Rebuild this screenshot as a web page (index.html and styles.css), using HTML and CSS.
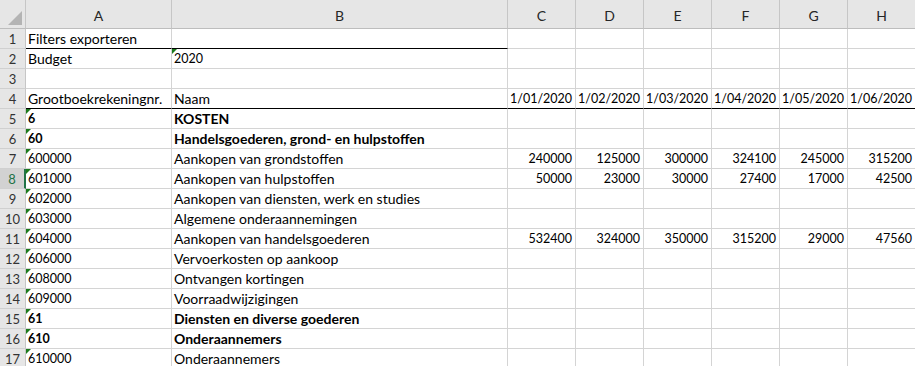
FILE: index.html
```html
<!DOCTYPE html>
<html lang="nl">
<head>
  <meta charset="UTF-8" />
  <title>Filters exporteren</title>
  <link rel="stylesheet" href="styles.css">
</head>
<body>
  <div class="sheet">
    <div class="row head">
      <div class="corner"><svg width="14" height="14" viewBox="0 0 14 14"><polygon points="14,0 14,14 0,14" fill="#b4b4b4"/></svg></div>
      <div class="col">A</div><div class="col">B</div><div class="col">C</div><div class="col">D</div>
      <div class="col">E</div><div class="col">F</div><div class="col">G</div><div class="col">H</div>
    </div>

    <div class="row">
      <div class="num">1</div>
      <div class="cell line">Filters exporteren</div><div class="cell line"></div>
      <div class="cell"></div><div class="cell"></div><div class="cell"></div><div class="cell"></div><div class="cell"></div><div class="cell"></div>
    </div>
    <div class="row">
      <div class="num">2</div>
      <div class="cell">Budget</div><div class="cell n flag">2020</div>
      <div class="cell"></div><div class="cell"></div><div class="cell"></div><div class="cell"></div><div class="cell"></div><div class="cell"></div>
    </div>
    <div class="row">
      <div class="num">3</div>
      <div class="cell"></div><div class="cell"></div>
      <div class="cell"></div><div class="cell"></div><div class="cell"></div><div class="cell"></div><div class="cell"></div><div class="cell"></div>
    </div>
    <div class="row">
      <div class="num">4</div>
      <div class="cell line">Grootboekrekeningnr.</div><div class="cell line">Naam</div>
      <div class="cell line n r">1/01/2020</div><div class="cell line n r">1/02/2020</div><div class="cell line n r">1/03/2020</div>
      <div class="cell line n r">1/04/2020</div><div class="cell line n r">1/05/2020</div><div class="cell line n r">1/06/2020</div>
    </div>
    <div class="row bold">
      <div class="num">5</div>
      <div class="cell n flag">6</div><div class="cell">KOSTEN</div>
      <div class="cell"></div><div class="cell"></div><div class="cell"></div><div class="cell"></div><div class="cell"></div><div class="cell"></div>
    </div>
    <div class="row bold">
      <div class="num">6</div>
      <div class="cell n flag">60</div><div class="cell">Handelsgoederen, grond- en hulpstoffen</div>
      <div class="cell"></div><div class="cell"></div><div class="cell"></div><div class="cell"></div><div class="cell"></div><div class="cell"></div>
    </div>
    <div class="row">
      <div class="num">7</div>
      <div class="cell n flag">600000</div><div class="cell">Aankopen van grondstoffen</div>
      <div class="cell n r">240000</div><div class="cell n r">125000</div><div class="cell n r">300000</div>
      <div class="cell n r">324100</div><div class="cell n r">245000</div><div class="cell n r">315200</div>
    </div>
    <div class="row">
      <div class="num sel">8</div>
      <div class="cell n flag">601000</div><div class="cell">Aankopen van hulpstoffen</div>
      <div class="cell n r">50000</div><div class="cell n r">23000</div><div class="cell n r">30000</div>
      <div class="cell n r">27400</div><div class="cell n r">17000</div><div class="cell n r">42500</div>
    </div>
    <div class="row">
      <div class="num">9</div>
      <div class="cell n flag">602000</div><div class="cell">Aankopen van diensten, werk en studies</div>
      <div class="cell"></div><div class="cell"></div><div class="cell"></div><div class="cell"></div><div class="cell"></div><div class="cell"></div>
    </div>
    <div class="row">
      <div class="num">10</div>
      <div class="cell n flag">603000</div><div class="cell">Algemene onderaannemingen</div>
      <div class="cell"></div><div class="cell"></div><div class="cell"></div><div class="cell"></div><div class="cell"></div><div class="cell"></div>
    </div>
    <div class="row">
      <div class="num">11</div>
      <div class="cell n flag">604000</div><div class="cell">Aankopen van handelsgoederen</div>
      <div class="cell n r">532400</div><div class="cell n r">324000</div><div class="cell n r">350000</div>
      <div class="cell n r">315200</div><div class="cell n r">29000</div><div class="cell n r">47560</div>
    </div>
    <div class="row">
      <div class="num">12</div>
      <div class="cell n flag">606000</div><div class="cell">Vervoerkosten op aankoop</div>
      <div class="cell"></div><div class="cell"></div><div class="cell"></div><div class="cell"></div><div class="cell"></div><div class="cell"></div>
    </div>
    <div class="row">
      <div class="num">13</div>
      <div class="cell n flag">608000</div><div class="cell">Ontvangen kortingen</div>
      <div class="cell"></div><div class="cell"></div><div class="cell"></div><div class="cell"></div><div class="cell"></div><div class="cell"></div>
    </div>
    <div class="row">
      <div class="num">14</div>
      <div class="cell n flag">609000</div><div class="cell">Voorraadwijzigingen</div>
      <div class="cell"></div><div class="cell"></div><div class="cell"></div><div class="cell"></div><div class="cell"></div><div class="cell"></div>
    </div>
    <div class="row bold">
      <div class="num">15</div>
      <div class="cell n flag">61</div><div class="cell">Diensten en diverse goederen</div>
      <div class="cell"></div><div class="cell"></div><div class="cell"></div><div class="cell"></div><div class="cell"></div><div class="cell"></div>
    </div>
    <div class="row bold">
      <div class="num">16</div>
      <div class="cell n flag">610</div><div class="cell">Onderaannemers</div>
      <div class="cell"></div><div class="cell"></div><div class="cell"></div><div class="cell"></div><div class="cell"></div><div class="cell"></div>
    </div>
    <div class="row">
      <div class="num">17</div>
      <div class="cell n flag">610000</div><div class="cell">Onderaannemers</div>
      <div class="cell"></div><div class="cell"></div><div class="cell"></div><div class="cell"></div><div class="cell"></div><div class="cell"></div>
    </div>
  </div>
</body>
</html>
```

FILE: styles.css
```css
:root {
  --grid: #d4d4d4;
  --head-bg: #e6e6e6;
  --head-line: #c6c6c6;
  --green: #217346;
  --flag: #1b7a1b;
}

* {
  margin: 0;
  padding: 0;
  box-sizing: border-box;
}

body {
  font-family: Lato, 'Liberation Sans', sans-serif;
  font-size: 14px;
  color: #000;
  background: #fff;
  overflow: hidden;
}

.sheet {
  width: 916px;
}

.row {
  display: grid;
  grid-template-columns: 26px 146px 336px repeat(6, 68px);
  height: 20px;
}

.row > div {
  border-right: 1px solid var(--grid);
  border-bottom: 1px solid var(--grid);
  line-height: 19px;
  white-space: nowrap;
  overflow: hidden;
}

.row.head {
  height: 29px;
}

.row.head > div {
  background: var(--head-bg);
  border-right-color: var(--head-line);
  border-bottom-color: #bdbdbd;
  color: #262626;
  display: flex;
  align-items: flex-end;
  justify-content: center;
  padding-bottom: 3px;
}

.row.head .corner {
  justify-content: flex-end;
  padding: 0 3px 3px 0;
}

.num {
  background: var(--head-bg);
  color: #333;
  font-size: 13px;
  line-height: 20px !important;
  text-align: center;
  border-right-color: var(--head-line) !important;
  border-bottom-color: #d0d0d0 !important;
}

.num.sel {
  background: #d2d2d2;
  color: var(--green);
  border-right: 2px solid var(--green) !important;
}

.cell {
  position: relative;
  padding: 0 3px 0 2px;
}

.cell.n {
  font-size: 12.5px;
  line-height: 20px;
}

.cell.r {
  text-align: right;
}

.cell.line {
  border-bottom-color: #000 !important;
}

.bold .cell {
  font-weight: bold;
}

.flag::before {
  content: "";
  position: absolute;
  top: 0;
  left: 0;
  border-top: 5px solid var(--flag);
  border-right: 5px solid transparent;
}
```
